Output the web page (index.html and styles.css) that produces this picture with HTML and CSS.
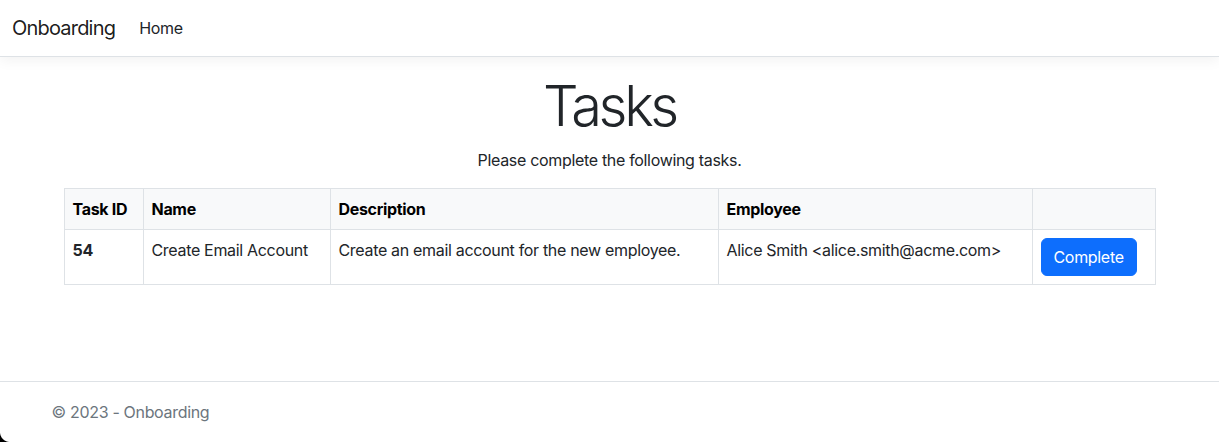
FILE: index.html
```html
<!DOCTYPE html>
<html lang="en">
<head>
<meta charset="utf-8">
<title>Tasks - Onboarding</title>
<link rel="stylesheet" href="styles.css">
</head>
<body>
<div class="page">
  <header class="navbar">
    <a class="brand" href="#">Onboarding</a>
    <a class="nav-link" href="#">Home</a>
  </header>
  <div class="container">
    <main class="main">
      <div class="inner">
        <h1 class="title">Tasks</h1>
        <p class="lead-text">Please complete the following tasks.</p>
        <table class="tasks">
          <thead>
            <tr>
              <th class="c-id">Task ID</th>
              <th class="c-name">Name</th>
              <th class="c-desc">Description</th>
              <th class="c-emp">Employee</th>
              <th class="c-act"></th>
            </tr>
          </thead>
          <tbody>
            <tr>
              <th>54</th>
              <td>Create Email Account</td>
              <td>Create an email account for the new employee.</td>
              <td>Alice Smith &lt;alice.smith@acme.com&gt;</td>
              <td><button class="btn-primary" type="button">Complete</button></td>
            </tr>
          </tbody>
        </table>
      </div>
    </main>
  </div>
  <footer class="footer">
    <div class="container">&copy; 2023 - Onboarding</div>
  </footer>
</div>
<div class="corner"></div>
</body>
</html>
```
FILE: styles.css
```css
* { box-sizing: border-box; }
html, body { margin: 0; padding: 0; }
body {
  font-family: "Inter", "Liberation Sans", sans-serif;
  font-size: 16px;
  line-height: 1.5;
  letter-spacing: -0.02em;
  color: #212529;
  background: #fff;
}
.page {
  min-height: 100vh;
  display: flex;
  flex-direction: column;
}
.navbar {
  display: flex;
  align-items: center;
  padding: 8px 12px;
  background: #fff;
  border-bottom: 1px solid #dee2e6;
  box-shadow: 0 4px 12px rgba(0,0,0,.05);
  margin-bottom: 16px;
}
.brand {
  font-size: 20px;
  line-height: 30px;
  letter-spacing: -0.04em;
  padding: 5px 0;
  margin-right: 16px;
  color: rgba(0,0,0,.9);
  text-decoration: none;
}
.nav-link {
  padding: 8px;
  color: #212529;
  text-decoration: none;
}
.container {
  width: 100%;
  max-width: 1140px;
  margin: 0 auto;
  padding: 0 12px;
}
.main { padding-bottom: 16px; }
.inner { padding: 0 12px; text-align: center; }
.title {
  font-size: 56px;
  font-weight: 300;
  line-height: 1.2;
  letter-spacing: -0.06em;
  margin: 0 0 8px;
}
.lead-text { margin: 0 0 16px; }
.tasks {
  width: 100%;
  border-collapse: collapse;
  text-align: left;
  vertical-align: top;
  border: 1px solid #dee2e6;
  margin-bottom: 16px;
}
.tasks th, .tasks td {
  border: 1px solid #dee2e6;
  padding: 8px;
  vertical-align: top;
}
.tasks thead th {
  background: #f8f9fa;
  color: #000;
  font-weight: 700;
}
.tasks tbody th { font-weight: 700; }
.c-id { width: 79px; }
.c-name { width: 187px; }
.c-desc { width: 388px; }
.c-emp { width: 314px; }
.btn-primary {
  font: inherit;
  letter-spacing: inherit;
  line-height: 24px;
  color: #fff;
  background: #0d6efd;
  border: 1px solid #0d6efd;
  border-radius: 6px;
  padding: 6px 12px;
  cursor: pointer;
}
.footer {
  margin-top: auto;
  border-top: 1px solid #dee2e6;
  line-height: 60px;
  color: #6c757d;
  white-space: nowrap;
}
.corner {
  position: fixed;
  left: 0;
  bottom: 0;
  width: 10px;
  height: 10px;
  background: radial-gradient(circle at 100% 0, transparent 9.5px, #000 10.5px);
}
```
